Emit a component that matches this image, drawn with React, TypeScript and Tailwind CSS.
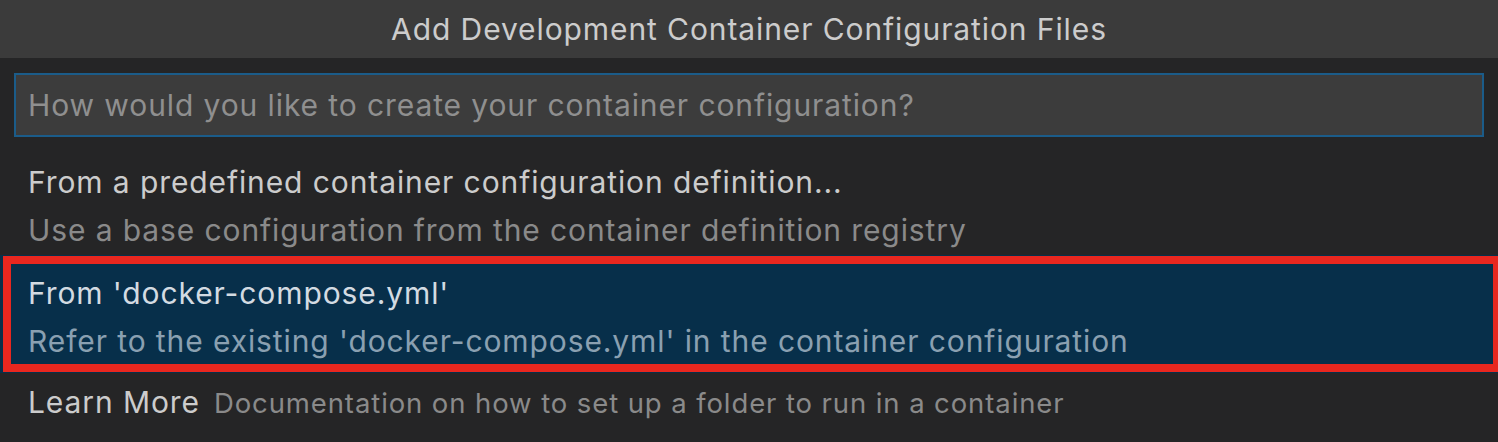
import React from "react";

export default function App() {
  return (
    <div className="relative w-[1498px] h-[442px] overflow-hidden bg-[#252526] font-['Inter','Liberation_Sans',sans-serif] text-[30px] tracking-[0.9px]">
      <div className="h-[58px] bg-[#3b3b3b] flex items-center justify-center text-[#cccccc]">
        Add Development Container Configuration Files
      </div>
      <div className="px-[14px] pt-[15px]">
        <div className="h-[64px] border-2 border-[#1b5c89] bg-[#3c3c3c] px-[12px] flex items-center text-[#8f8f8f]">
          How would you like to create your container configuration?
        </div>
      </div>
      <div className="mt-[8px] flex flex-col">
        <div className="h-[110px] pl-[28px] pt-[13px] leading-[48px]">
          <div className="text-[#cccccc]">From a predefined container configuration definition...</div>
          <div className="text-[#8a8a8a]">Use a base configuration from the container definition registry</div>
        </div>
        <div className="h-[118px] pl-[28px] pt-[14px] leading-[48px] bg-[#072f4a]">
          <div className="text-[#d3dbe2]">From 'docker-compose.yml'</div>
          <div className="text-[#8aa0b1]">Refer to the existing 'docker-compose.yml' in the container configuration</div>
        </div>
        <div className="pl-[28px] pt-[6px] leading-[47px] flex items-baseline gap-[14px]">
          <span className="text-[#cccccc]">Learn More</span>
          <span className="text-[#8a8a8a] text-[27.5px]">Documentation on how to set up a folder to run in a container</span>
        </div>
      </div>
      <div className="absolute left-[3px] top-[256px] w-[1498px] h-[116px] border-[8px] border-[#e8271f]" />
    </div>
  );
}
